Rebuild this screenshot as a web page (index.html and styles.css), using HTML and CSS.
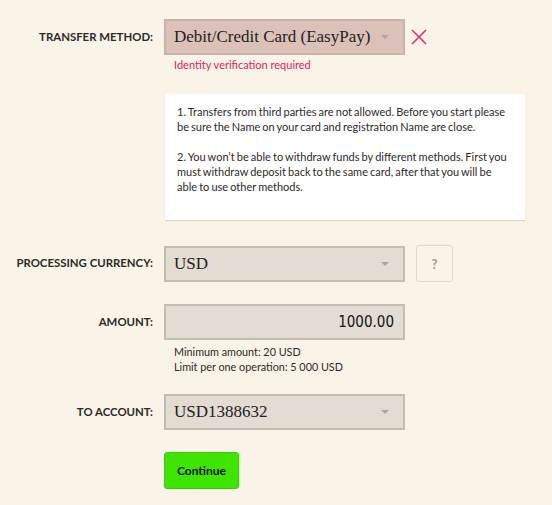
FILE: index.html
```html
<!DOCTYPE html>
<html lang="en">
<head>
  <meta charset="UTF-8">
  <meta name="viewport" content="width=device-width, initial-scale=1.0">
  <title>Deposit</title>
  <link rel="stylesheet" href="styles.css">
</head>

<body>
  <form class="deposit-form">
    <div class="row row-method">
      <label class="label">Transfer method:</label>
      <div class="field">
        <div class="field-line">
          <div class="select select-error">
            <span>Debit/Credit Card (EasyPay)</span>
            <i class="arrow"></i>
          </div>
          <svg class="cross" width="16" height="16" viewBox="0 0 16 16">
            <path d="M1 1 L15 15 M15 1 L1 15" stroke="#e3336c" stroke-width="1.6" fill="none"/>
          </svg>
        </div>
        <div class="error-text">Identity verification required</div>
      </div>
    </div>

    <div class="info-box">
      <p>1. Transfers from third parties are not allowed. Before you start please be sure the Name on your card and registration Name are close.</p>
      <p>2. You won’t be able to withdraw funds by different methods. First you must withdraw deposit back to the same card, after that you will be able to use other methods.</p>
    </div>

    <div class="row row-currency">
      <label class="label">Processing currency:</label>
      <div class="field">
        <div class="field-line">
          <div class="select">
            <span>USD</span>
            <i class="arrow"></i>
          </div>
          <button type="button" class="help-btn">?</button>
        </div>
      </div>
    </div>

    <div class="row row-amount">
      <label class="label">Amount:</label>
      <div class="field">
        <div class="amount-input">1000.00</div>
      </div>
    </div>
    <div class="hints">
      <div>Minimum amount: 20 USD</div>
      <div>Limit per one operation: 5 000 USD</div>
    </div>

    <div class="row row-account">
      <label class="label">To account:</label>
      <div class="field">
        <div class="select">
          <span>USD1388632</span>
          <i class="arrow"></i>
        </div>
      </div>
    </div>

    <div class="actions">
      <button type="button" class="continue-btn">Continue</button>
    </div>
  </form>
</body>
</html>
```

FILE: styles.css
```css
body {
  margin: 0;
  padding: 0;
  background-color: #f9f3e8;
  font-family: "Lato", "Open Sans", sans-serif;
  color: #333;
}

.deposit-form {
  padding-top: 19px;
  width: 552px;
}

.row {
  display: flex;
  align-items: flex-start;
}

.label {
  width: 153px;
  flex: none;
  margin-right: 11px;
  height: 36px;
  line-height: 36px;
  text-align: right;
  text-transform: uppercase;
  font-weight: bold;
  font-size: 11.4px;
  color: #2e2a26;
}

.field-line {
  display: flex;
  align-items: center;
}

.select {
  box-sizing: border-box;
  width: 241px;
  height: 36px;
  padding: 0 10px 0 8px;
  display: flex;
  align-items: center;
  justify-content: space-between;
  background-color: #e2dcd2;
  border: 2px solid #c4bdb1;
  font-family: "Liberation Serif", "DejaVu Serif", serif;
  font-size: 17px;
  color: #222;
}

.select-error {
  background-color: #dcc1b9;
  border-color: #c5b4ab;
}

.arrow {
  width: 0;
  height: 0;
  border-left: 4px solid transparent;
  border-right: 4px solid transparent;
  border-top: 4px solid #aaa49b;
  margin-right: 4px;
}

.cross {
  margin-left: 6px;
}

.error-text {
  margin-top: 3px;
  padding-left: 10px;
  font-size: 11px;
  line-height: 14px;
  color: #d8245e;
}

.info-box {
  box-sizing: border-box;
  width: 360px;
  height: 126px;
  margin: 22px 0 0 165px;
  padding: 10px 14px 0 12px;
  background-color: #fff;
  box-shadow: 0 1px 1px rgba(0, 0, 0, 0.12);
  font-size: 11px;
  line-height: 15px;
  word-spacing: -0.7px;
  color: #2e2a26;
}

.info-box p {
  margin: 0 0 15px;
}

.row-currency {
  margin-top: 25px;
}

.help-btn {
  box-sizing: border-box;
  width: 37px;
  height: 37px;
  margin-left: 11px;
  background: transparent;
  border: 1px solid #e0d8cb;
  border-radius: 3px;
  font-family: "Lato", sans-serif;
  font-weight: bold;
  font-size: 13px;
  color: #a39c92;
}

.row-amount {
  margin-top: 22px;
}

.amount-input {
  box-sizing: border-box;
  width: 241px;
  height: 36px;
  padding: 0 9px;
  line-height: 32px;
  text-align: right;
  background-color: #e2dcd2;
  border: 2px solid #c4bdb1;
  font-family: "DejaVu Sans Condensed", "DejaVu Sans", sans-serif;
  font-stretch: condensed;
  font-size: 15px;
  color: #111;
}

.hints {
  margin: 4px 0 0 174px;
  font-size: 10.8px;
  line-height: 15px;
  color: #2e2a26;
}

.row-account {
  margin-top: 20px;
}

.actions {
  margin: 22px 0 0 164px;
}

.continue-btn {
  width: 75px;
  height: 37px;
  background-color: #3de500;
  border: 1px solid #36cf00;
  border-radius: 3px;
  font-family: "Lato", sans-serif;
  font-weight: bold;
  font-size: 12px;
  color: #111;
}
```
